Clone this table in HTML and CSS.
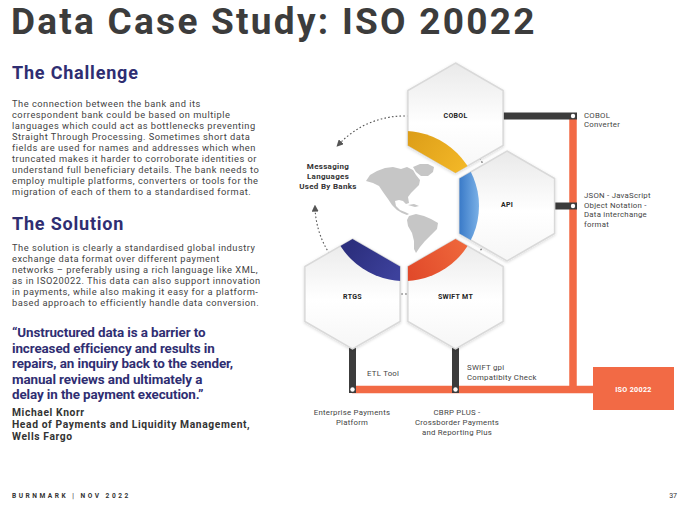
FILE: index.html
```html
<!DOCTYPE html>
<html lang="en">
<head>
<meta charset="utf-8">
<title>Data Case Study: ISO 20022</title>
<link rel="stylesheet" href="styles.css">
</head>
<body>
<div class="slide">
  <h1 class="title">Data Case Study: ISO 20022</h1>
  <div class="main">
    <div class="left">
      <h2 class="heading heading-challenge">The Challenge</h2>
      <p class="body-text body-challenge">The connection between the bank and its<br>correspondent bank could be based on multiple<br>languages which could act as bottlenecks preventing<br>Straight Through Processing. Sometimes short data<br>fields are used for names and addresses which when<br>truncated makes it harder to corroborate identities or<br>understand full beneficiary details. The bank needs to<br>employ multiple platforms, converters or tools for the<br>migration of each of them to a standardised format.</p>
      <h2 class="heading heading-solution">The Solution</h2>
      <p class="body-text body-solution">The solution is clearly a standardised global industry<br>exchange data format over different payment<br>networks – preferably using a rich language like XML,<br>as in ISO20022. This data can also support innovation<br>in payments, while also making it easy for a platform-<br>based approach to efficiently handle data conversion.</p>
      <blockquote class="quote">“Unstructured data is a barrier to<br>increased efficiency and results in<br>repairs, an inquiry back to the sender,<br>manual reviews and ultimately a<br>delay in the payment execution.”</blockquote>
      <p class="author">Michael Knorr<br>Head of Payments and Liquidity Management,<br>Wells Fargo</p>
    </div>
    <svg class="diagram" width="400" height="400" viewBox="280 44 400 400" xmlns="http://www.w3.org/2000/svg">
      <defs>
        <linearGradient id="hexFill" x1="0" y1="0" x2="0" y2="1">
          <stop offset="0" stop-color="#e9e9e9"/>
          <stop offset="0.55" stop-color="#ffffff"/>
          <stop offset="1" stop-color="#f6f6f6"/>
        </linearGradient>
        <linearGradient id="gold" gradientUnits="userSpaceOnUse" x1="408" y1="130" x2="468" y2="172">
          <stop offset="0" stop-color="#dc9d18"/>
          <stop offset="1" stop-color="#f4b928"/>
        </linearGradient>
        <linearGradient id="blue" gradientUnits="userSpaceOnUse" x1="460" y1="0" x2="480" y2="0">
          <stop offset="0" stop-color="#3c7cc9"/>
          <stop offset="1" stop-color="#7db3e8"/>
        </linearGradient>
        <linearGradient id="orange" gradientUnits="userSpaceOnUse" x1="408" y1="270" x2="470" y2="240">
          <stop offset="0" stop-color="#e14a2a"/>
          <stop offset="1" stop-color="#f06a3d"/>
        </linearGradient>
        <linearGradient id="navy" gradientUnits="userSpaceOnUse" x1="355" y1="240" x2="400" y2="270">
          <stop offset="0" stop-color="#2c2f7e"/>
          <stop offset="1" stop-color="#3d419c"/>
        </linearGradient>
        <clipPath id="clipCobol"><polygon points="455.5,63 503.1,90.5 503.1,145.5 455.5,173 407.9,145.5 407.9,90.5"/></clipPath>
        <clipPath id="clipApi"><polygon points="507,151 554.6,178.5 554.6,233.5 507,261 459.4,233.5 459.4,178.5"/></clipPath>
        <clipPath id="clipSwift"><polygon points="455.5,239 503.1,266.5 503.1,321.5 455.5,349 407.9,321.5 407.9,266.5"/></clipPath>
        <clipPath id="clipRtgs"><polygon points="352.5,239 400.1,266.5 400.1,321.5 352.5,349 304.9,321.5 304.9,266.5"/></clipPath>
        <filter id="shadow" x="-20%" y="-20%" width="140%" height="140%">
          <feDropShadow dx="0" dy="1" stdDeviation="1.4" flood-color="#000" flood-opacity="0.16"/>
        </filter>
        <marker id="arrow" viewBox="0 0 10 10" refX="5" refY="5" markerWidth="7" markerHeight="7" orient="auto-start-reverse" markerUnits="userSpaceOnUse">
          <path d="M0,0 L10,5 L0,10 Z" fill="#555"/>
        </marker>
      </defs>

      <!-- dotted orbit -->
      <path class="orbit" d="M338.9,144.3 A89,89 0 1 1 315.05,208.1" marker-start="url(#arrow)" marker-end="url(#arrow)"/>

      <!-- globe -->
      <g class="globe">
        <path d="M366,181 L370,175 L377,171 L385,168 L393,167 L401,169 L407,167 L413,170 L416,175 L420,180 L419,185 L415,189 L411,193 L408,197 L409,203 L406,204 L403,201 L399,200 L395,201 L396,206 L400,210 L405,212 L409,214 L407,215 L402,213 L397,210 L392,205 L388,199 L383,192 L379,186 L373,183 Z"/>
        <path d="M413,167 L420,164 L428,164 L434,167 L433,172 L428,176 L421,176 L416,172 Z"/>
        <path d="M408,205 L414,204 L419,206 L415,207 Z"/>
        <path d="M409,216 L416,214 L424,216 L431,219 L438,223 L437,229 L431,235 L425,241 L420,247 L416,253 L414,249 L414,241 L412,233 L408,226 L407,220 Z"/>
      </g>

      <!-- connectors -->
      <line class="bus" x1="352" y1="389.5" x2="594" y2="389.5"/>
      <line class="bus" x1="573" y1="113" x2="573" y2="393"/>
      <line class="stem" x1="503" y1="116" x2="577" y2="116"/>
      <line class="stem" x1="554" y1="206" x2="577" y2="206"/>
      <line class="stem" x1="352.5" y1="347" x2="352.5" y2="393"/>
      <line class="stem" x1="455.5" y1="347" x2="455.5" y2="393"/>
      <circle class="dot" cx="573" cy="116" r="2.2"/>
      <circle class="dot" cx="573" cy="206" r="2.2"/>
      <circle class="dot" cx="352.5" cy="389.5" r="2.2"/>
      <circle class="dot" cx="455.5" cy="389.5" r="2.2"/>

      <!-- hexagons -->
      <g class="hex">
        <polygon class="hex-shape" points="455.5,63 503.1,90.5 503.1,145.5 455.5,173 407.9,145.5 407.9,90.5"/>
        <circle cx="404" cy="206" r="75" fill="url(#gold)" clip-path="url(#clipCobol)"/>
        <text class="hex-label" x="455.5" y="118">COBOL</text>
      </g>
      <g class="hex">
        <polygon class="hex-shape" points="507,151 554.6,178.5 554.6,233.5 507,261 459.4,233.5 459.4,178.5"/>
        <circle cx="404" cy="206" r="75" fill="url(#blue)" clip-path="url(#clipApi)"/>
        <text class="hex-label" x="507" y="207">API</text>
      </g>
      <g class="hex">
        <polygon class="hex-shape" points="455.5,239 503.1,266.5 503.1,321.5 455.5,349 407.9,321.5 407.9,266.5"/>
        <circle cx="404" cy="206" r="75" fill="url(#orange)" clip-path="url(#clipSwift)"/>
        <text class="hex-label" x="455.5" y="298.5">SWIFT MT</text>
      </g>
      <g class="hex">
        <polygon class="hex-shape" points="352.5,239 400.1,266.5 400.1,321.5 352.5,349 304.9,321.5 304.9,266.5"/>
        <circle cx="404" cy="206" r="75" fill="url(#navy)" clip-path="url(#clipRtgs)"/>
        <text class="hex-label" x="352.5" y="298.5">RTGS</text>
      </g>

      <!-- ISO box -->
      <rect class="iso-box" x="593" y="367" width="81" height="43"/>
      <text class="iso-label" x="633.5" y="391.5">ISO 20022</text>

      <!-- labels -->
      <text class="center-label" x="328"><tspan x="328" y="169">Messaging</tspan><tspan x="328" y="179">Languages</tspan><tspan x="328" y="189">Used By Banks</tspan></text>
      <text class="note"><tspan x="584" y="117.5">COBOL</tspan><tspan x="584" y="127">Converter</tspan></text>
      <text class="note"><tspan x="584" y="198">JSON - JavaScript</tspan><tspan x="584" y="207.7">Object Notation -</tspan><tspan x="584" y="217.4">Data interchange</tspan><tspan x="584" y="227.1">format</tspan></text>
      <text class="note" x="367" y="376">ETL Tool</text>
      <text class="note"><tspan x="467" y="370">SWIFT gpi</tspan><tspan x="467" y="380">Compatibity Check</tspan></text>
      <text class="note note-center"><tspan x="352" y="415">Enterprise Payments</tspan><tspan x="352" y="425">Platform</tspan></text>
      <text class="note note-center"><tspan x="457" y="415">CBRP PLUS -</tspan><tspan x="457" y="425">Crossborder Payments</tspan><tspan x="457" y="435">and Reporting Plus</tspan></text>
    </svg>
  </div>
  <footer class="footer">
    <span class="footer-brand">BURNMARK | NOV 2022</span>
    <span class="footer-page">37</span>
  </footer>
</div>
</body>
</html>
```
FILE: styles.css
```css
* { box-sizing: border-box; }
html, body { margin: 0; padding: 0; background: #ffffff; }
body { font-family: Roboto, "Open Sans", "Liberation Sans", sans-serif; }

.slide {
  width: 680px;
  height: 509px;
  display: flex;
  flex-direction: column;
}

.title {
  margin: 0;
  padding: 3px 0 0 11px;
  height: 44px;
  font-size: 37px;
  line-height: 38px;
  font-weight: 700;
  color: #3c3c3c;
  letter-spacing: 2.25px;
  white-space: nowrap;
}

.main {
  display: flex;
  height: 400px;
}

.left {
  width: 280px;
  padding-left: 12px;
  flex: none;
}

.heading {
  margin: 0;
  font-size: 18px;
  line-height: 22px;
  font-weight: 700;
  letter-spacing: 0.8px;
  color: #2f2e72;
  white-space: nowrap;
}
.heading-challenge { margin-top: 18px; }
.heading-solution { margin-top: 16px; }

.body-text {
  margin: 0;
  font-size: 9.3px;
  line-height: 11px;
  letter-spacing: 0.5px;
  color: #444444;
  white-space: nowrap;
}
.body-challenge { margin-top: 14px; }
.body-solution { margin-top: 8px; line-height: 10.9px; }

.quote {
  margin: 17px 0 0 0;
  font-size: 13.4px;
  line-height: 15.5px;
  font-weight: 700;
  letter-spacing: -0.1px;
  color: #2f2e72;
  white-space: nowrap;
}

.author {
  margin: 4px 0 0 0;
  font-size: 10.3px;
  line-height: 12px;
  font-weight: 700;
  letter-spacing: 0.6px;
  color: #333333;
  white-space: nowrap;
}

.diagram { display: block; flex: none; overflow: visible; }

.orbit {
  fill: none;
  stroke: #555555;
  stroke-width: 1.1;
  stroke-dasharray: 1.6 2.2;
}
.globe path { fill: #c6c6c6; }

.bus { stroke: #f26a45; stroke-width: 7.5; }
.stem { stroke: #3c3c3c; stroke-width: 7; }
.dot { fill: #ffffff; }

.hex-shape {
  fill: url(#hexFill);
  stroke: #d9d9d9;
  stroke-width: 1.5;
  filter: url(#shadow);
}
.hex-label {
  font-family: Roboto, "Open Sans", sans-serif;
  font-size: 7px;
  font-weight: 700;
  letter-spacing: 0.3px;
  fill: #222222;
  text-anchor: middle;
}

.iso-box { fill: #f26a45; }
.iso-label {
  font-family: Roboto, "Open Sans", sans-serif;
  font-size: 7.2px;
  font-weight: 700;
  letter-spacing: 0.3px;
  fill: #ffffff;
  text-anchor: middle;
}

.center-label {
  font-family: Roboto, "Open Sans", sans-serif;
  font-size: 8px;
  font-weight: 700;
  letter-spacing: 0.3px;
  fill: #333333;
  text-anchor: middle;
}
.note {
  font-family: Roboto, "Open Sans", sans-serif;
  font-size: 7.8px;
  letter-spacing: 0.25px;
  fill: #444444;
}
.note-center { text-anchor: middle; }

.footer {
  margin-top: auto;
  display: flex;
  justify-content: space-between;
  align-items: center;
  padding: 0 3px 2px 12px;
  height: 24px;
  font-size: 6.6px;
  font-weight: 700;
  color: #333333;
}
.footer-brand { letter-spacing: 2.5px; }
.footer-page { font-weight: 400; font-size: 7px; }
```
